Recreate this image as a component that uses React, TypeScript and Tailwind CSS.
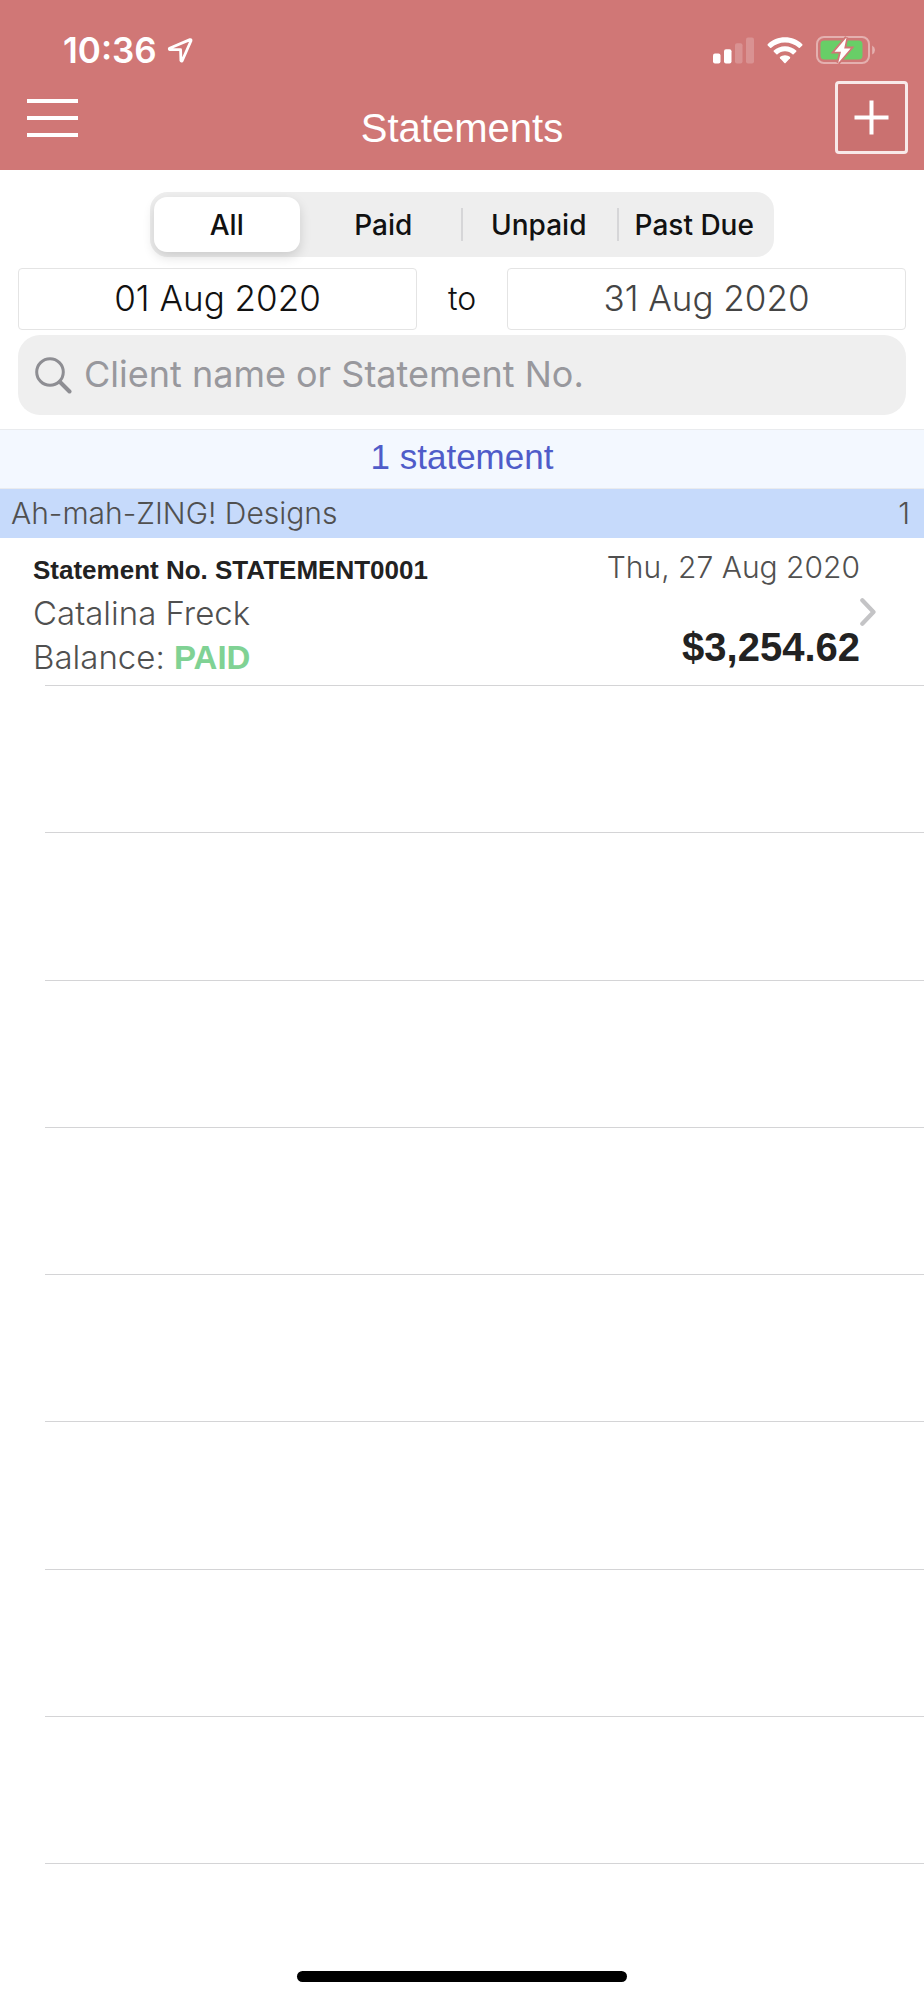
import { useState } from "react";

const filters = ["All", "Paid", "Unpaid", "Past Due"];
const emptyRows = [1, 2, 3, 4, 5, 6, 7, 8];

function StatusBar() {
  return (
    <div className="flex h-20 items-center justify-between pt-5 pr-12 pl-[63px]">
      <div className="flex items-center gap-2.5">
        <span className="font-['Inter',sans-serif] text-[35px] leading-10 font-semibold">10:36</span>
        <svg width="26" height="26" viewBox="0 0 26 26" fill="none" aria-hidden="true">
          <path
            d="M23 2.6 2.6 11.2Q1.8 12.2 3 12.6L13.6 12.7 13.9 23.6Q14.3 24.6 15.2 23.7L24 3.8Q24.2 2.3 23 2.6Z"
            stroke="#fff"
            strokeWidth="2.8"
            strokeLinejoin="round"
          />
        </svg>
      </div>
      <div className="flex items-center gap-3">
        <svg width="42" height="27" viewBox="0 0 42 27" aria-hidden="true">
          <rect x="0" y="16.5" width="7.5" height="10" rx="2" fill="#fff" />
          <rect x="11" y="12.2" width="7.5" height="14.3" rx="2" fill="#fff" />
          <rect x="22" y="6.2" width="7.5" height="20.3" rx="2" fill="#d99292" />
          <rect x="33" y="0.4" width="8" height="26.1" rx="2" fill="#d99292" />
        </svg>
        <svg width="36" height="27" viewBox="0 0 36 27" fill="#fff" aria-hidden="true">
          <path d="M18 .3C24.7.3 30.8 2.9 35.3 7.2Q35.8 7.8 35.3 8.4L32.9 10.8Q32.3 11.3 31.7 10.8C28 7.4 23.2 5.4 18 5.4S8 7.4 4.3 10.8Q3.7 11.3 3.1 10.8L.7 8.4Q.2 7.8.7 7.2C5.2 2.9 11.3.3 18 .3Z" />
          <path d="M18 9.200C22.300 9.200 26.200 10.800 29.200 13.500Q29.800 14.100 29.200 14.700L26.600 17.200Q26.100 17.700 25.500 17.200C23.500 15.400 20.900 14.300 18 14.300S12.500 15.400 10.500 17.200Q9.900 17.700 9.400 17.200L6.800 14.700Q6.200 14.100 6.800 13.500C9.800 10.800 13.700 9.200 18 9.200Z" />
          <path d="M18 18.200C20 18.200 21.700 18.900 23 20Q23.500 20.600 23 21.200L18.600 25.900Q18 26.400 17.400 25.900L13 21.200Q12.500 20.600 13 20C14.300 18.900 16 18.200 18 18.200Z" />
        </svg>
        <svg width="61" height="28" viewBox="-1 0 61 28" aria-hidden="true">
          <rect x="1" y="1" width="52" height="26" rx="7" fill="none" stroke="#e4b0af" strokeWidth="2" />
          <path d="M56.2 9.5Q59 11 59 14T56.2 18.5Z" fill="#e4b0af" />
          <rect x="4.5" y="4.5" width="42" height="19" rx="4" fill="#68ce67" />
          <path
            d="M30.5 1.500 18.500 15.700H25L22.200 27 34.600 12.400H28.200Z"
            fill="#fff"
            stroke="#d07776"
            strokeWidth="3.6"
            paintOrder="stroke"
          />
        </svg>
      </div>
    </div>
  );
}

export default function App() {
  const [active, setActive] = useState("All");
  const [from, setFrom] = useState("01 Aug 2020");
  const [to, setTo] = useState("31 Aug 2020");
  const [query, setQuery] = useState("");

  return (
    <div className="flex min-h-screen flex-col bg-white font-['Liberation_Sans',Arial,sans-serif] text-[#222]">
      <header className="bg-[#d07776] text-white">
        <StatusBar />
        <div className="grid h-[90px] grid-cols-[1fr_auto_1fr] items-start px-4">
          <button type="button" aria-label="Menu" className="ml-[11px] flex w-[51px] flex-col gap-[13px] pt-[19px]">
            <span className="h-1 w-full bg-white" />
            <span className="h-1 w-full bg-white" />
            <span className="h-1 w-full bg-white" />
          </button>
          <h1 className="pt-6 text-[40px] leading-[48px]">Statements</h1>
          <button
            type="button"
            aria-label="Add statement"
            className="mt-px flex size-[73px] items-center justify-center justify-self-end rounded-sm border-[3px] border-[#f8e9e9] bg-[#ca7170]"
          >
            <svg width="35" height="35" viewBox="0 0 35 35" stroke="#fff" strokeWidth="4" aria-hidden="true">
              <path d="M17.5 .5V34.5M.5 17.5H34.5" />
            </svg>
          </button>
        </div>
      </header>

      <main className="flex flex-1 flex-col">
        <div className="flex flex-col px-[18px] pt-[22px] pb-3.5">
          <div
            role="group"
            aria-label="Status filter"
            className="mx-auto flex h-[65px] w-[624px] max-w-full rounded-[18px] bg-[#eeeeee] pr-0.5 font-['Inter',sans-serif] text-[28px] font-medium text-[#111]"
          >
            {filters.map((name, i) => (
              <div key={name} className="flex min-w-0 flex-1 items-center">
                {i > 1 && <span className="-mr-0.5 h-[33px] w-0.5 bg-[#d6d6d8]" />}
                <button
                  type="button"
                  aria-pressed={active === name}
                  onClick={() => setActive(name)}
                  className={
                    active === name
                      ? "mr-1.5 ml-1 h-[55px] flex-1 rounded-[13px] bg-white shadow-[0_5px_12px_rgba(0,0,0,0.14)]"
                      : "h-full flex-1 whitespace-nowrap"
                  }
                >
                  {name}
                </button>
              </div>
            ))}
          </div>

          <div className="mt-[11px] flex h-[62px] items-stretch font-['Inter',sans-serif] text-[35px] font-light">
            <input
              aria-label="From date"
              value={from}
              onChange={(e) => setFrom(e.target.value)}
              className="w-0 min-w-0 flex-1 rounded border border-[#e4e4e4] pb-0.5 text-center text-[#111]"
            />
            <span className="flex w-[90px] items-center justify-center text-[32px] text-[#111]">to</span>
            <input
              aria-label="To date"
              value={to}
              onChange={(e) => setTo(e.target.value)}
              className="w-0 min-w-0 flex-1 rounded border border-[#e4e4e4] pb-0.5 text-center text-[#444]"
            />
          </div>

          <label className="mt-[5px] flex h-20 items-center gap-3 rounded-[22px] bg-[#efefef] pl-[17px]">
            <svg
              width="37"
              height="37"
              viewBox="0 0 37 37"
              fill="none"
              stroke="#8e8e93"
              strokeWidth="3"
              strokeLinecap="round"
              aria-hidden="true"
            >
              <circle cx="15" cy="15" r="13.3" />
              <path d="M25 25 34.5 34.5" strokeWidth="4" />
            </svg>
            <input
              type="text"
              aria-label="Search statements"
              placeholder="Client name or Statement No."
              value={query}
              onChange={(e) => setQuery(e.target.value)}
              className="min-w-0 flex-1 bg-transparent pb-0.5 font-['Inter',sans-serif] text-[36px] text-[#222] outline-none placeholder:text-[#98989d]"
            />
          </label>
        </div>

        <p className="flex h-[60px] items-center justify-center border-y border-[#e9ebee] bg-[#f3f8ff] pb-[3px] text-[35px] text-[#4f5cc9]">
          1 statement
        </p>

        <h2 className="flex h-[49px] items-center justify-between bg-[#c6dafb] pr-3.5 pl-[11px] font-['Inter',sans-serif] text-[30px] font-light text-[#505050]">
          <span>Ah-mah-ZING! Designs</span>
          <span>1</span>
        </h2>

        <a href="#statement-0001" className="flex h-[147px] pl-[33px]">
          <div className="flex flex-1 flex-col pt-2.5">
            <span className="text-[26px] leading-[44px] font-bold">Statement No. STATEMENT0001</span>
            <span className="font-['Inter',sans-serif] text-[33px] leading-[42px] font-light text-[#505050]">
              Catalina Freck
            </span>
            <span className="font-['Inter',sans-serif] text-[33px] leading-[46px] font-light text-[#505050]">
              Balance: <b className="font-['Liberation_Sans',Arial,sans-serif] font-bold text-[#80d294]">PAID</b>
            </span>
          </div>
          <div className="flex flex-col items-end pt-[9px]">
            <span className="font-['Inter',sans-serif] text-[30px] leading-[40px] font-light text-[#505050]">
              Thu, 27 Aug 2020
            </span>
            <span className="mt-9 text-[40px] leading-[48px] font-bold">$3,254.62</span>
          </div>
          <div className="flex w-16 items-center">
            <svg width="16" height="28" viewBox="0 0 16 28" fill="none" aria-hidden="true">
              <path
                d="M2.3 2.3 13.500 14 2.3 25.7"
                stroke="#c4c4c6"
                strokeWidth="4.2"
                strokeLinecap="round"
                strokeLinejoin="round"
              />
            </svg>
          </div>
        </a>

        <div className="ml-[45px] flex flex-1 flex-col" aria-hidden="true">
          {emptyRows.map((row) => (
            <div key={row} className="min-h-[120px] flex-1 border-t border-[#d4d4d6]" />
          ))}
          <div className="h-px bg-[#d4d4d6]" />
        </div>
      </main>

      <footer className="flex h-[136px] items-end justify-center pb-[18px]">
        <div className="h-[11px] w-[330px] rounded-full bg-black" />
      </footer>
    </div>
  );
}
